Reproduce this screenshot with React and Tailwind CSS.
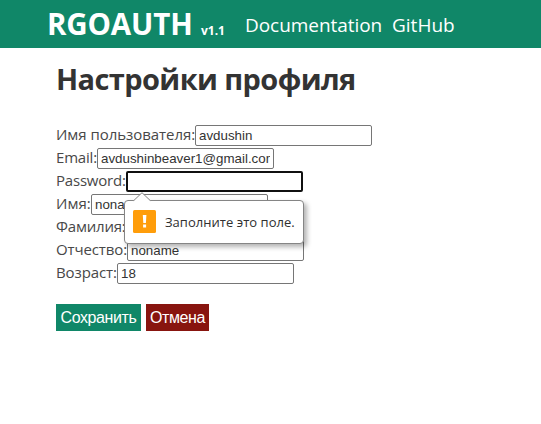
import React from "react";

const fields = [
  { label: "Имя пользователя:", value: "avdushin", cls: "w-[139px]", text: "tracking-[-0.04px]" },
  { label: "Email:", value: "avdushinbeaver1@gmail.com", cls: "w-[41px]", text: "tracking-[-0.2px]" },
  { label: "Password:", value: "", cls: "w-[70px]", text: "tracking-[-0.2px]", focused: true },
  { label: "Имя:", value: "noname", cls: "w-[35px]", text: "tracking-[0px]" },
  { label: "Фамилия:", value: "noname", cls: "w-[69px]", text: "tracking-[-0.2px]" },
  { label: "Отчество:", value: "noname", cls: "w-[71px]", text: "tracking-[-0.12px]" },
  { label: "Возраст:", value: "18", cls: "w-[61px]", text: "tracking-[-0.1px]" },
];

function Hint() {
  return (
    <div className="absolute left-[-3px] top-[21px] z-10 h-[52px] w-[181px] font-['Open_Sans',sans-serif]">
      <div className="mt-[8px] ml-px flex h-[44px] w-[180px] items-center rounded-[4px] border border-[#858585] bg-white pl-[8px] shadow-[3px_3px_5px_rgba(0,0,0,0.3)]">
        <svg width="23" height="23" viewBox="0 0 23 23" className="shrink-0 -translate-y-px">
          <rect width="23" height="23" rx="1.5" fill="#ff9d0a" />
          <path d="M9.8 5h3.6l-.5 8h-2.6zM10.1 14.6h3v3h-3z" fill="#fff" />
        </svg>
        <span className="ml-[9px] whitespace-nowrap text-[13px] leading-5 tracking-[0.03px] text-[#303030]">
          Заполните это поле.
        </span>
      </div>
      <svg className="absolute left-[10px] top-0" width="18" height="10" viewBox="0 0 18 10">
        <path d="M0 9.8L1 8.5L9 .7L17 8.5L18 9.8z" fill="#fff" />
        <path d="M.8 8.5L9 .7L17.2 8.5" fill="none" stroke="#858585" />
      </svg>
    </div>
  );
}

export default function App() {
  return (
    <div className="h-[424px] w-[541px] overflow-hidden bg-white font-['Open_Sans',sans-serif] text-[#333]">
      <header className="flex h-12 items-baseline bg-[#108768] pl-12 text-white">
        <b className="-ml-px w-[154px] whitespace-nowrap text-[29.5px] leading-[48px] tracking-[-0.15px]">RGOAUTH</b>
        <b className="w-[44px] text-[12px]">v1.1</b>
        <nav className="flex -translate-y-[3px] text-[19px] leading-[28px]">
          <a className="w-[147px] whitespace-nowrap tracking-[-0.05px]">Documentation</a>
          <a>GitHub</a>
        </nav>
      </header>
      <main className="pl-14">
        <h1 className="h-[76px] whitespace-nowrap pt-[11px] text-[29px] font-bold leading-[40px] tracking-[-0.6px]">
          Настройки профиля
        </h1>
        <form>
          {fields.map((f) => (
            <div key={f.label} className="flex h-[23px] items-start">
              <label className={`${f.cls} ${f.text} shrink-0 whitespace-nowrap text-[15px] leading-[21px] text-[#484848]`}>
                {f.label}
              </label>
              <div className="relative mt-px">
                <input
                  readOnly
                  defaultValue={f.value}
                  className={`block h-[21px] w-[177px] rounded-[2px] bg-white font-['Liberation_Sans',Arial,sans-serif] text-[13.33px] leading-[15px] outline-none ${
                    f.focused ? "border-2 border-[#101010] px-[2px]" : "border border-[#767676] px-[3px]"
                  }`}
                />
                {f.focused && <Hint />}
              </div>
            </div>
          ))}
          <div className="mt-[19px] flex gap-[5px] font-['Liberation_Sans',Arial,sans-serif] text-[16px] leading-[27px] tracking-[-0.4px] text-white">
            <button type="button" className="h-[27px] w-[85px] whitespace-nowrap bg-[#108768]">Сохранить</button>
            <button type="button" className="h-[27px] w-[63px] whitespace-nowrap bg-[#88150f]">Отмена</button>
          </div>
        </form>
      </main>
    </div>
  );
}
